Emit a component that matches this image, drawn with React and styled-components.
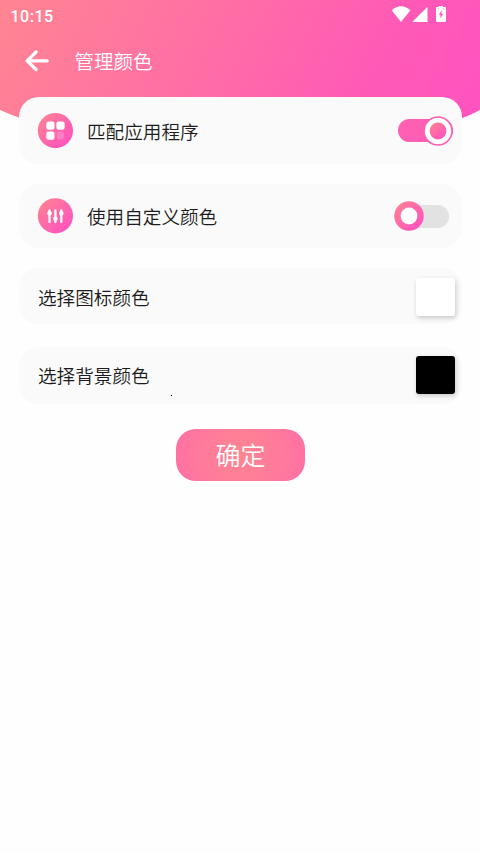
import React, { useState } from 'react'
import styled, { createGlobalStyle } from 'styled-components'

const GlobalStyle = createGlobalStyle`
  * {
    box-sizing: border-box;
  }

  body {
    margin: 0;
    background: #fefefe;
    font-family: Roboto, "Noto Sans CJK SC", sans-serif;
  }
`

const Page = styled.div`
  width: 480px;
  min-height: 853px;
  overflow: hidden;
`

const Header = styled.header`
  height: 128px;
  color: #fff;
  background: linear-gradient(118deg, #ff8591 0%, #ff7b9b 18%, #ff6ba7 47%, #ff59b7 76%, #ff53c0 100%);
  clip-path: path("M0 0H480V110Q471 115 460 119L440 127H40L20 118Q9 114 0 110Z");
`

const StatusBar = styled.div`
  display: flex;
  justify-content: space-between;
  height: 32px;
  padding: 0 33px 0 10.5px;
`

const Clock = styled.span`
  font-size: 16px;
  font-weight: 500;
  line-height: 33px;
  letter-spacing: 0.5px;
`

const StatusIcons = styled.svg`
  width: 56px;
  height: 24px;
`

const TitleBar = styled.div`
  display: flex;
  align-items: center;
  height: 57px;
  padding-left: 25px;
`

const BackButton = styled.button`
  display: flex;
  width: 24px;
  height: 22px;
  margin-right: 25.5px;
  padding: 0;
  border: none;
  background: none;
  cursor: pointer;
`

const Title = styled.h1`
  margin: 0;
  padding-top: 4px;
  font-size: 19.5px;
  font-weight: 350;
  line-height: 28px;
`

const Main = styled.main`
  position: relative;
  display: flex;
  flex-direction: column;
  margin: -31px 18px 0 19px;
`

const Card = styled.section`
  display: flex;
  align-items: center;
  height: ${props => props.height};
  margin-bottom: ${props => props.gap};
  padding: ${props => props.padding};
  border-radius: 20px;
  background: #fafafa;
`

const Label = styled.span`
  flex: 1;
  padding-top: 4px;
  color: #1c1c20;
  font-size: 18.6px;
  font-weight: 350;
  line-height: 28px;
`

const RoundIcon = styled.svg`
  flex: none;
  width: 36px;
  height: 36px;
  margin-right: 14px;
`

const Switch = styled.button`
  display: flex;
  flex: none;
  align-items: center;
  justify-content: ${props => props.$on ? "flex-end" : "flex-start"};
  width: 55px;
  height: 23px;
  margin-right: ${props => props.$on ? "9px" : "13px"};
  padding: 0;
  border: none;
  border-radius: 12px;
  background: ${props => props.$on ? "linear-gradient(90deg, #ff60b2, #ff5cb5)" : "#e2e2e2"};
  cursor: pointer;
`

const Knob = styled.svg`
  flex: none;
  width: 30px;
  height: 30px;
`

const Swatch = styled.button`
  flex: none;
  width: 39px;
  height: 38px;
  margin-right: 7px;
  padding: 0;
  border: none;
  border-radius: 3px;
  background: ${props => props.color};
  box-shadow: 1px 2px 5px rgba(0, 0, 0, 0.2);
  cursor: pointer;
`

const Confirm = styled.button`
  align-self: center;
  width: 129px;
  height: 52px;
  margin-right: 1px;
  padding: 0 0 2px 1px;
  border: none;
  border-radius: 20px;
  color: #fff;
  background: radial-gradient(circle at 50% 50%, #ff8590 0%, #ff7c9a 45%, #ff70a5 100%);
  font-family: inherit;
  font-size: 25px;
  font-weight: 350;
  cursor: pointer;
`

const Dot = styled.i`
  position: absolute;
  left: 152px;
  top: 298px;
  width: 1px;
  height: 1px;
  background: #000;
`

const Pink = ({ id }) => (
  <defs>
    <linearGradient id={id} x1="0" y1="0" x2="1" y2="1">
      <stop offset="0.08" stopColor="#ff8193" />
      <stop offset="0.85" stopColor="#ff55bd" />
    </linearGradient>
  </defs>
)

const AppsIcon = () => (
  <RoundIcon viewBox="0 0 36 36">
    <Pink id="apps" />
    <circle cx="18.4" cy="17.6" r="17.6" fill="url(#apps)" />
    <rect x="9.3" y="8.6" width="8.2" height="8.2" rx="2.2" fill="#fff" />
    <rect x="19.4" y="8.6" width="8.2" height="8.2" rx="2.2" fill="#fff" />
    <rect x="9.3" y="18.6" width="8.2" height="8.2" rx="2.2" fill="#fff" />
    <rect x="19.8" y="18.8" width="7.4" height="7.6" rx="3.2" fill="#fff" opacity="0.2" />
  </RoundIcon>
)

const SlidersIcon = () => (
  <RoundIcon viewBox="0 0 36 36">
    <Pink id="sliders" />
    <circle cx="18.4" cy="17.8" r="17.6" fill="url(#sliders)" />
    <g stroke="#fff" strokeWidth="2.3" strokeLinecap="round">
      <path d="M12.5 12.3V24M18.4 12.3V24M24.3 12.3V24" />
    </g>
    <g fill="#fff">
      <circle cx="12.5" cy="15.3" r="2.3" />
      <circle cx="18.4" cy="20.8" r="2.3" />
      <circle cx="24.3" cy="15.3" r="2.3" />
    </g>
  </RoundIcon>
)

const Toggle = ({ id, on, onClick }) => (
  <Switch $on={on} onClick={onClick}>
    <Knob viewBox="0 0 30 30">
      <Pink id={id} />
      <circle cx="15" cy="15" r="14.7" fill={on ? "#ff5fb2" : `url(#${id})`} />
      {on && <circle cx="15" cy="15" r="13.2" fill="#fff" />}
      <circle cx="15" cy="15" r="8.4" fill={on ? `url(#${id})` : "#fff"} />
    </Knob>
  </Switch>
)

const App = () => {
  const [match, setMatch] = useState(true)
  const [custom, setCustom] = useState(false)

  return (
    <Page>
      <GlobalStyle />
      <Header>
        <StatusBar>
          <Clock>10:15</Clock>
          <StatusIcons viewBox="391 0 56 24" fill="#fff">
            <path d="M401 22L391.7 10.2Q401 2.4 410.4 10.2Z" />
            <path d="M412.3 22H427.5V6.8Z" />
            <path d="M438.7 7V6H443V7H445Q446 7 446 8V21Q446 22 445 22H437Q436 22 436 21V8Q436 7 437 7Z" />
            <path d="M441.6 10.2L438.9 14.8H440.5V18.6L443.2 13.8H441.6Z" fill="#ff58b8" />
            <path d="M438 8.4H439.2V9.6H438ZM442.8 8.4H444V9.6H442.8Z" fill="#ff8fcd" />
          </StatusIcons>
        </StatusBar>
        <TitleBar>
          <BackButton>
            <svg width="24" height="22" viewBox="0 0 24 22" fill="none" stroke="#fff" strokeWidth="3.3" strokeLinecap="round" strokeLinejoin="round">
              <path d="M11 2L2.2 10.8L11 19.5M2.8 10.8H22.2" />
            </svg>
          </BackButton>
          <Title>管理颜色</Title>
        </TitleBar>
      </Header>
      <Main>
        <Card height="67px" gap="20px" padding="0 0 0 18px">
          <AppsIcon />
          <Label>匹配应用程序</Label>
          <Toggle id="match" on={match} onClick={() => setMatch(!match)} />
        </Card>
        <Card height="64px" gap="20px" padding="0 0 0 18px">
          <SlidersIcon />
          <Label>使用自定义颜色</Label>
          <Toggle id="custom" on={custom} onClick={() => setCustom(!custom)} />
        </Card>
        <Card height="56px" gap="23px" padding="2px 0 0 19px">
          <Label>选择图标颜色</Label>
          <Swatch color="#fff" />
        </Card>
        <Card height="57px" gap="25px" padding="0 0 2px 19px">
          <Label>选择背景颜色</Label>
          <Swatch color="#000" />
        </Card>
        <Confirm>确定</Confirm>
        <Dot />
      </Main>
    </Page>
  )
}

export default App
